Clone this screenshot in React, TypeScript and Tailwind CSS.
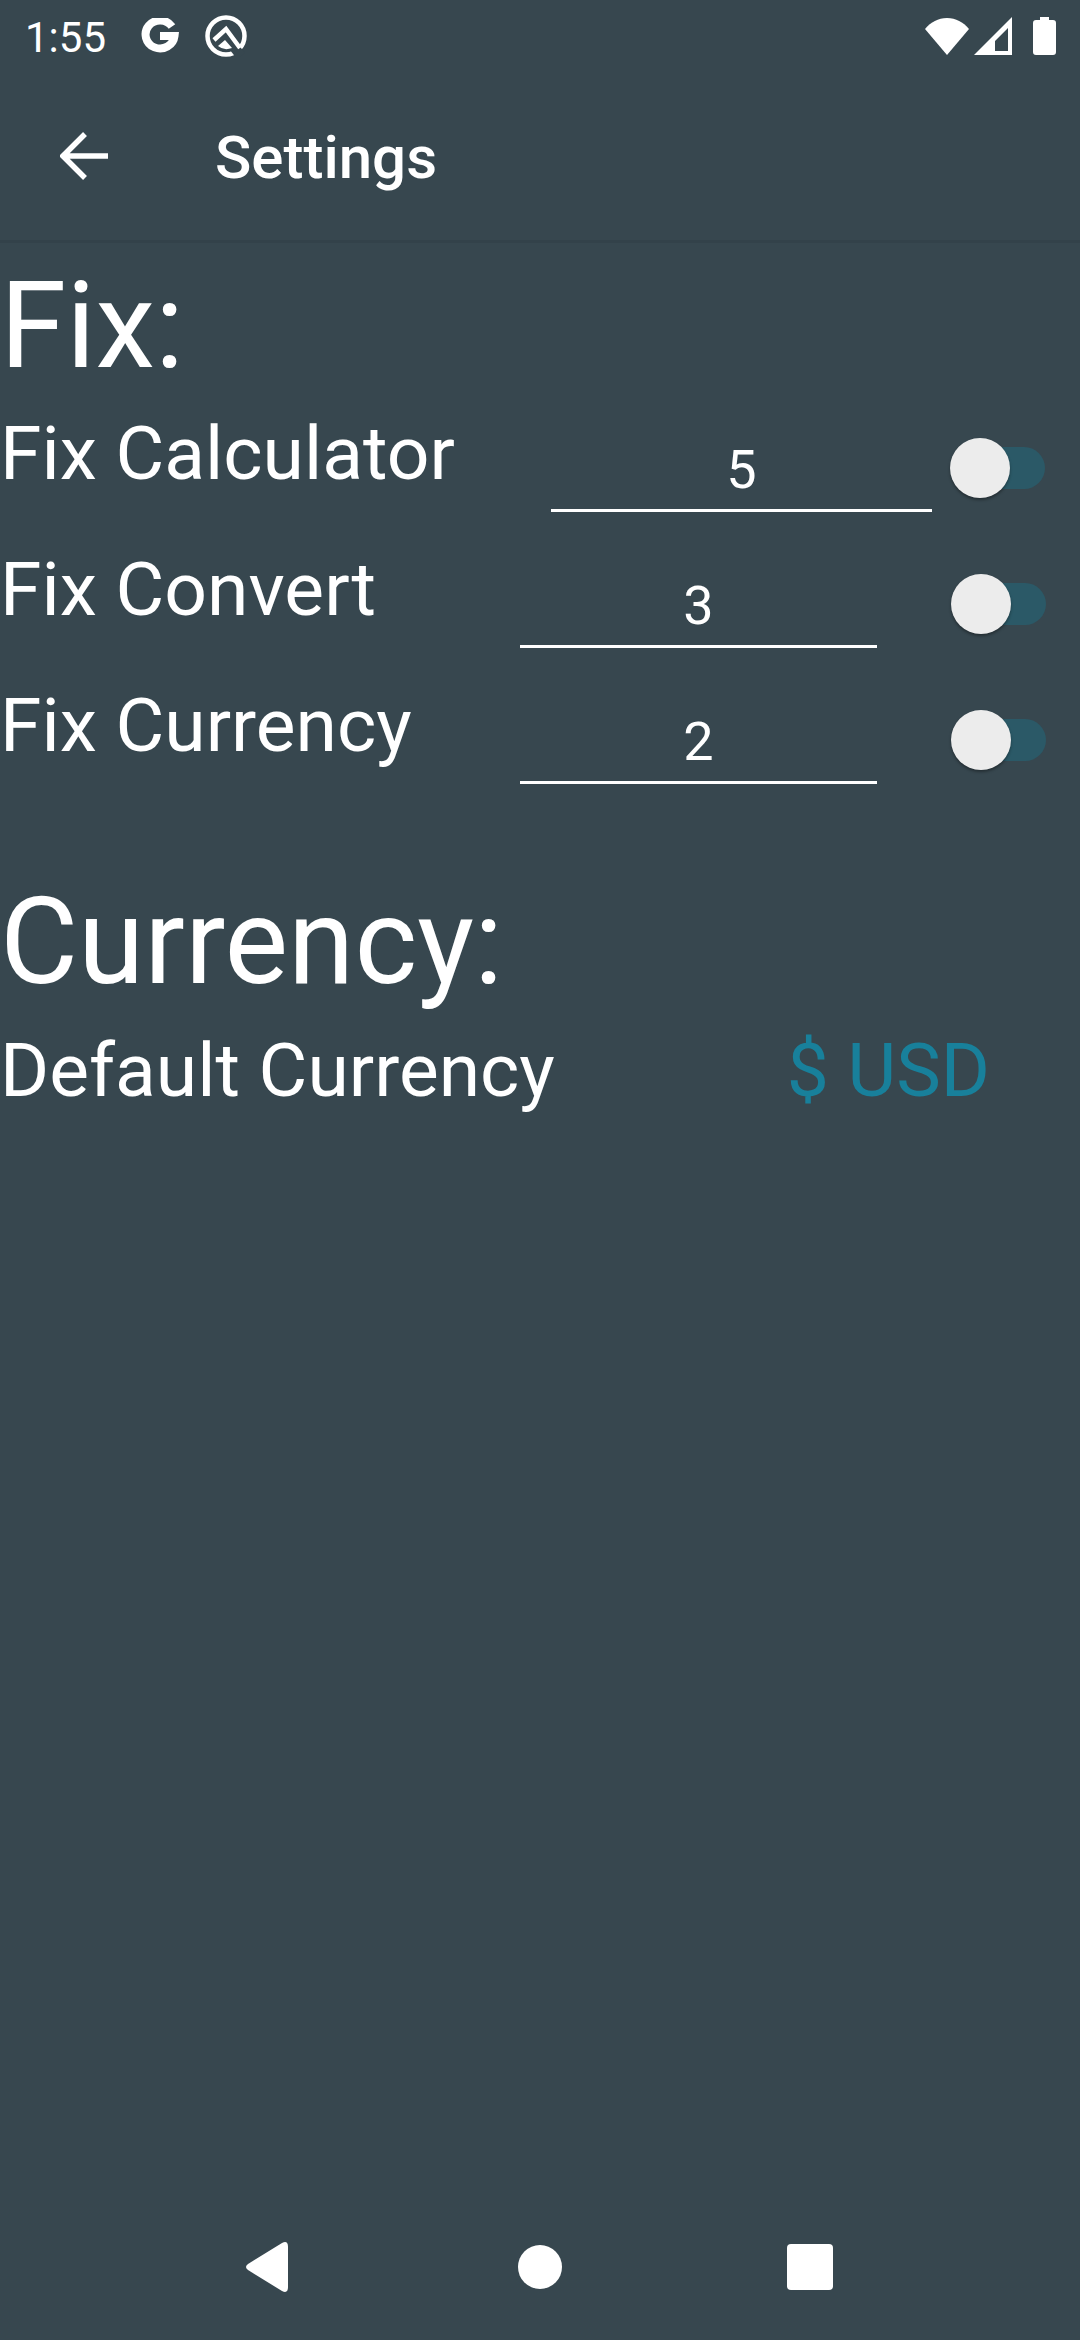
import React from 'react';

const FIX_ROWS = [
  { label: 'Fix Calculator', value: '5', inputWidth: 'w-[381px]', gap: 'mr-[18px]', toggleMargin: 'mr-[35px]' },
  { label: 'Fix Convert', value: '3', inputWidth: 'w-[357px]', gap: 'mr-[74px]', toggleMargin: 'mr-[34px]' },
  { label: 'Fix Currency', value: '2', inputWidth: 'w-[357px]', gap: 'mr-[74px]', toggleMargin: 'mr-[34px]' },
];

const StatusBar = () => (
  <div className="h-[72px] flex items-center text-white">
    <span className="ml-[25px] w-[116px] pt-[3px] text-[42px] leading-none">1:55</span>
    <svg width="38" height="36" viewBox="0 0 38 36" fill="none" stroke="white" strokeWidth="8">
      <path d="M31 8.5A14.5 14 0 1 0 33.5 18H19" />
    </svg>
    <svg className="ml-[26px]" width="42" height="42" viewBox="0 0 42 42" fill="none" stroke="white">
      <circle cx="21" cy="21" r="18.5" strokeWidth="4.5" />
      <path d="M25 27L36 41" strokeWidth="10" stroke="#37474f" />
      <path d="M9 25L21 14L35 33" strokeWidth="4.5" />
      <path d="M13 31L20 25L27 33Q19 36 13 31Z" fill="white" stroke="none" />
    </svg>
    <div className="ml-auto mr-[24px] flex items-center gap-[5px]">
      <svg width="44" height="38" viewBox="0 0 44 38" fill="white">
        <path d="M22 38L0 12C6 5 13 1 22 1C31 1 38 5 44 12Z" />
      </svg>
      <svg width="38" height="38" viewBox="0 0 38 38" fill="white" className="mr-[16px]">
        <path fillRule="evenodd" d="M0 38L38 0V38ZM21 34H34V11L21 24Z" />
      </svg>
      <svg width="23" height="38" viewBox="0 0 23 38" fill="white">
        <path d="M7 0H16V3H20Q23 3 23 6V35Q23 38 20 38H3Q0 38 0 35V6Q0 3 3 3H7Z" />
      </svg>
    </div>
  </div>
);

const Toggle = () => (
  <div className="relative w-[95px] h-[60px] flex items-center">
    <div className="ml-[26px] w-[69px] h-[42px] rounded-full bg-[#2b5967]" />
    <div className="absolute left-0 top-0 w-[60px] h-[60px] rounded-full bg-[#ececec] shadow-[0_2px_3px_rgba(0,0,0,0.35)]" />
  </div>
);

type FixRowProps = { label: string; value: string; inputWidth: string; gap: string; toggleMargin: string };

const FixRow = ({ label, value, inputWidth, gap, toggleMargin }: FixRowProps) => (
  <div className="h-[136px] flex text-white">
    <div className="flex-1 text-[75px] leading-[88px] pt-[13px]">{label}</div>
    <div className={`${inputWidth} ${gap} h-[116px] border-b-[3px] border-white text-center text-[54px] leading-[64px] pt-[42px]`}>{value}</div>
    <div className={`pt-[42px] ${toggleMargin}`}>
      <Toggle />
    </div>
  </div>
);

export default function App() {
  return (
    <div className='font-["Roboto",sans-serif] w-[1080px] h-[2340px] bg-[#37474f] flex flex-col overflow-hidden'>
      <StatusBar />
      <div className="h-[171px] shrink-0 flex items-center border-b-[3px] border-[#33424a] text-white">
        <svg className="ml-[60px]" width="48" height="48" viewBox="0 0 48 48" fill="none" stroke="white" strokeWidth="5.5">
          <path d="M48 24H4M25 2L3 24L25 46" />
        </svg>
        <span className="ml-[107px] mt-[3px] text-[60px] font-medium leading-none">Settings</span>
      </div>

      <div className="mt-[13px] text-white text-[120px] leading-[140px]">Fix:</div>
      <div>
        {FIX_ROWS.map((row) => (
          <FixRow key={row.label} {...row} />
        ))}
      </div>

      <div className="mt-[68px] text-white text-[120px] leading-[140px]">Currency:</div>
      <div className="mt-[14px] flex items-center">
        <div className="flex-1 text-white text-[75px] leading-[88px]">Default Currency</div>
        <div className="mr-[90px] text-[#18809b] text-[75px] leading-[88px]">$ USD</div>
      </div>

      <div className="mt-auto mb-[48px] flex items-center">
        <svg className="ml-[245px]" width="44" height="50" viewBox="0 0 44 50" fill="white">
          <path d="M37 1Q43 -2 43 5V45Q43 52 37 49L3 28Q-1 25 3 22Z" />
        </svg>
        <div className="ml-[229px] w-[44px] h-[44px] rounded-full bg-white" />
        <div className="ml-[225px] w-[46px] h-[46px] rounded-[4px] bg-white" />
      </div>
    </div>
  );
}
